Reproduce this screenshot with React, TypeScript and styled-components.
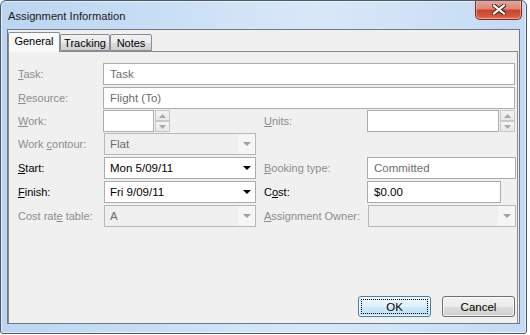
import React from 'react';
import styled, { createGlobalStyle } from 'styled-components';

const GlobalStyle = createGlobalStyle`
	html, body {
		margin: 0;
		padding: 0;
		background: #ffffff;
	}
	body {
		font-family: 'Liberation Sans', Arial, sans-serif;
		font-size: 11px;
	}
`;

type Field = {
	label: string;
	hotkey: number;
	enabled?: boolean;
};

const Label = ({ label, hotkey, enabled }: Field) => (
	<LabelText $enabled={enabled}>
		{label.slice(0, hotkey)}
		<u>{label.charAt(hotkey)}</u>
		{label.slice(hotkey + 1)}
	</LabelText>
);

const Spinner = () => (
	<SpinBox>
		<SpinHalf>
			<svg width="7" height="4" viewBox="0 0 7 4">
				<path d="M3.5 0 L7 4 L0 4 Z" fill="#a8a8a8" />
			</svg>
		</SpinHalf>
		<SpinHalf>
			<svg width="7" height="4" viewBox="0 0 7 4">
				<path d="M0 0 L7 0 L3.5 4 Z" fill="#a8a8a8" />
			</svg>
		</SpinHalf>
	</SpinBox>
);

const Combo = ({
	value,
	enabled,
	width,
}: {
	value: string;
	enabled?: boolean;
	width: number;
}) => (
	<ComboBox $enabled={enabled} $width={width}>
		<ComboText $enabled={enabled}>{value}</ComboText>
		<ComboButton $enabled={enabled}>
			<svg width="8" height="4" viewBox="0 0 8 4">
				<path d="M0 0 L8 0 L4 4 Z" fill={enabled ? '#000' : '#a0a0a0'} />
			</svg>
		</ComboButton>
	</ComboBox>
);

export default function App() {
	return (
		<>
			<GlobalStyle />
			<Window>
				<TitleBar>
					<Title>Assignment Information</Title>
					<CloseButton>
						<svg width="14" height="11" viewBox="0 0 14 11">
							<path
								d="M2 1.5 L12 9.5 M12 1.5 L2 9.5"
								stroke="#4a1f18"
								strokeWidth="4.2"
								strokeLinecap="square"
							/>
							<path
								d="M2 1.5 L12 9.5 M12 1.5 L2 9.5"
								stroke="#ffffff"
								strokeWidth="2.2"
								strokeLinecap="square"
							/>
						</svg>
					</CloseButton>
				</TitleBar>

				<Client>
					<TabStrip>
						<Tab $active $width={52}>General</Tab>
						<Tab $width={50}>Tracking</Tab>
						<Tab $width={42}>Notes</Tab>
					</TabStrip>

					<Panel>
						<FormGrid>
							<Label label="Task:" hotkey={0} />
							<TextBox $span>
								<BoxText>Task</BoxText>
							</TextBox>

							<Label label="Resource:" hotkey={0} />
							<TextBox $span>
								<BoxText>Flight (To)</BoxText>
							</TextBox>

							<Label label="Work:" hotkey={0} />
							<SpinField>
								<TextBox $width={51} />
								<Spinner />
							</SpinField>
							<span />
							<Label label="Units:" hotkey={0} />
							<SpinField>
								<TextBox $width={133} />
								<Spinner />
							</SpinField>

							<Label label="Work contour:" hotkey={5} />
							<Combo value="Flat" width={152} />
							<span />
							<span />
							<span />

							<Label label="Start:" hotkey={0} enabled />
							<Combo value="Mon 5/09/11" width={152} enabled />
							<span />
							<Label label="Booking type:" hotkey={0} />
							<TextBox $width={149}>
								<BoxText>Committed</BoxText>
							</TextBox>

							<Label label="Finish:" hotkey={0} enabled />
							<Combo value="Fri 9/09/11" width={152} enabled />
							<span />
							<Label label="Cost:" hotkey={1} enabled />
							<TextBox $width={134}>
								<BoxText $enabled>$0.00</BoxText>
							</TextBox>

							<Label label="Cost rate table:" hotkey={8} />
							<Combo value="A" width={152} />
							<span />
							<Label label="Assignment Owner:" hotkey={0} />
							<Combo value="" width={148} />
						</FormGrid>

						<ButtonRow>
							<DialogButton $default>
								<FocusRect>OK</FocusRect>
							</DialogButton>
							<DialogButton>Cancel</DialogButton>
						</ButtonRow>
					</Panel>
				</Client>
			</Window>
		</>
	);
}

const Window = styled.div`
	box-sizing: border-box;
	width: 527px;
	height: 334px;
	display: flex;
	flex-direction: column;
	border: 1px solid #4b5a6b;
	border-radius: 6px 6px 3px 3px;
	background: linear-gradient(90deg, #bcd5f1 0%, #c9def5 30%, #d8e8f9 60%, #c4daf3 100%);
	box-shadow: inset 0 0 0 1px rgba(255, 255, 255, 0.55);
	overflow: hidden;
`;

const TitleBar = styled.div`
	height: 28px;
	flex: none;
	display: flex;
	align-items: flex-start;
	justify-content: space-between;
	padding: 0 4px 0 7px;
`;

const Title = styled.div`
	margin-top: 9px;
	font-family: 'Liberation Sans', Arial, sans-serif;
	font-size: 11.2px;
	color: #1a1a1a;
`;

const CloseButton = styled.div`
	box-sizing: border-box;
	width: 47px;
	height: 20px;
	margin-top: -1px;
	display: flex;
	align-items: center;
	justify-content: center;
	border: 1px solid #7d2a1e;
	border-top: none;
	border-radius: 0 0 5px 5px;
	background: linear-gradient(
		180deg,
		#e9a99c 0%,
		#dc8876 45%,
		#c7452c 55%,
		#d2583d 85%,
		#e07a5c 100%
	);
	box-shadow: inset 0 0 0 1px rgba(255, 210, 200, 0.5);
`;

const Client = styled.div`
	flex: 1;
	margin: 0 6px 9px 6px;
	border: 1px solid #6f7a86;
	background: #f0f0f0;
	display: flex;
	flex-direction: column;
	padding-top: 2px;
	padding-right: 1px;
`;

const TabStrip = styled.div`
	display: flex;
	align-items: flex-end;
	height: 19px;
	flex: none;
	position: relative;
	z-index: 1;
`;

const Tab = styled.div<{ $active?: boolean; $width: number }>`
	box-sizing: border-box;
	width: ${(p) => p.$width}px;
	height: ${(p) => (p.$active ? 20 : 17)}px;
	margin-bottom: ${(p) => (p.$active ? -1 : 0)}px;
	border: 1px solid #898c95;
	border-bottom: ${(p) => (p.$active ? 'none' : '1px solid #898c95')};
	border-radius: 2px 2px 0 0;
	background: ${(p) =>
		p.$active
			? '#f9f9f9'
			: 'linear-gradient(180deg, #f2f2f2 0%, #ebebeb 50%, #dddddd 51%, #cfcfcf 100%)'};
	display: flex;
	justify-content: center;
	align-items: ${(p) => (p.$active ? 'flex-start' : 'center')};
	padding-top: ${(p) => (p.$active ? 2 : 0)}px;
	font-size: 11px;
	color: #000;
`;

const Panel = styled.div`
	flex: 1;
	display: flex;
	flex-direction: column;
	border: 1px solid #898c95;
	border-bottom: none;
	background: #f0f0f0;
	padding: 11px 1px 6px 9px;
`;

const FormGrid = styled.div`
	display: grid;
	grid-template-columns: 85px 152px 9px 103px 148px;
	grid-template-rows: 24px 23px 23px 24px 24px 24px 22px;
	align-items: start;
`;

const LabelText = styled.div<{ $enabled?: boolean }>`
	height: 22px;
	line-height: 22px;
	font-size: 11px;
	white-space: nowrap;
	color: ${(p) => (p.$enabled ? '#000' : '#8d8d8d')};
`;

const TextBox = styled.div<{ $span?: boolean; $width?: number }>`
	box-sizing: border-box;
	height: 22px;
	${(p) => (p.$span ? 'grid-column: 2 / 6;' : '')}
	width: ${(p) => (p.$width ? `${p.$width}px` : 'auto')};
	border: 1px solid #acacac;
	background: #ffffff;
	display: flex;
	align-items: center;
	padding-left: 6px;
`;

const BoxText = styled.span<{ $enabled?: boolean }>`
	font-size: 11.5px;
	color: ${(p) => (p.$enabled ? '#000' : '#6d6d6d')};
`;

const SpinField = styled.div`
	display: flex;
	gap: 1px;
`;

const SpinBox = styled.div`
	display: flex;
	flex-direction: column;
	width: 15px;
`;

const SpinHalf = styled.div`
	box-sizing: border-box;
	height: 11px;
	border: 1px solid #c8c8c8;
	background: linear-gradient(180deg, #f4f4f4, #e8e8e8);
	display: flex;
	align-items: center;
	justify-content: center;
`;

const ComboBox = styled.div<{ $enabled?: boolean; $width: number }>`
	box-sizing: border-box;
	width: ${(p) => p.$width}px;
	height: 22px;
	margin-left: 1px;
	display: flex;
	border: 1px solid ${(p) => (p.$enabled ? '#acacac' : '#b8b8b8')};
	background: ${(p) => (p.$enabled ? '#ffffff' : '#efefef')};
`;

const ComboText = styled.div<{ $enabled?: boolean }>`
	flex: 1;
	display: flex;
	align-items: center;
	padding-left: 5px;
	font-size: 11.5px;
	color: ${(p) => (p.$enabled ? '#000' : '#6d6d6d')};
`;

const ComboButton = styled.div<{ $enabled?: boolean }>`
	width: 17px;
	display: flex;
	align-items: center;
	justify-content: center;
	background: ${(p) => (p.$enabled ? '#ffffff' : '#f5f5f5')};
`;

const ButtonRow = styled.div`
	margin-top: auto;
	display: flex;
	justify-content: flex-end;
	gap: 11px;
	padding-right: 1px;
`;

const DialogButton = styled.div<{ $default?: boolean }>`
	box-sizing: border-box;
	width: 73px;
	height: 21px;
	border: 1px solid ${(p) => (p.$default ? '#3c7fb1' : '#707070')};
	border-radius: 3px;
	background: ${(p) =>
		p.$default
			? 'linear-gradient(180deg, #edf7fd 0%, #e0f1fb 50%, #cfe9f9 51%, #bde0f5 100%)'
			: 'linear-gradient(180deg, #f2f2f2 0%, #ebebeb 50%, #dddddd 51%, #cfcfcf 100%)'};
	box-shadow: inset 0 0 0 1px rgba(255, 255, 255, 0.7);
	display: flex;
	align-items: center;
	justify-content: center;
	padding: 2px;
	font-size: 11.5px;
	color: #000;
`;

const FocusRect = styled.div`
	box-sizing: border-box;
	width: 100%;
	height: 100%;
	border: 1px dotted #000;
	display: flex;
	align-items: center;
	justify-content: center;
`;
